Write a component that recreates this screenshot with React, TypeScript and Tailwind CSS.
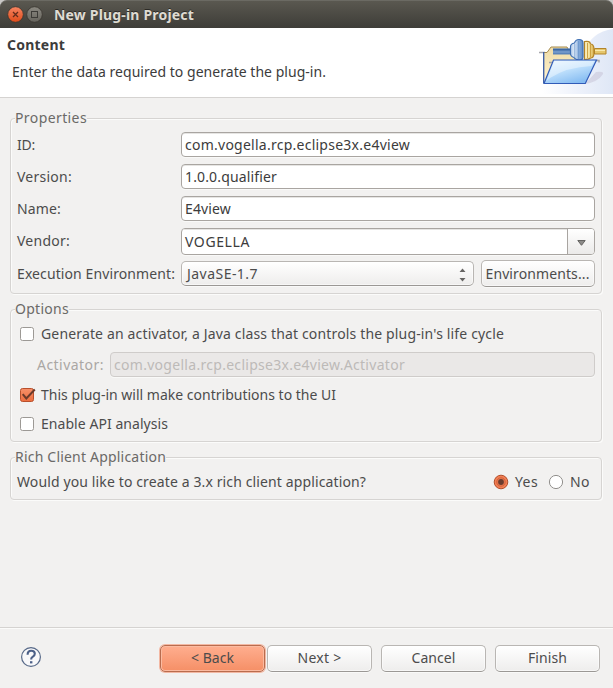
import { useLayoutEffect, useRef, useState } from 'react';
import type { ReactNode } from 'react';
import clsx from 'clsx';

/* A single line of text whose letter spacing is adjusted to fill a given width. */
function Text({ children, w, className }: { children: string; w: number; className?: string }) {
  const ref = useRef<HTMLSpanElement>(null);
  const [spacing, setSpacing] = useState(0);
  useLayoutEffect(() => {
    const el = ref.current;
    if (!el) return;
    const natural = el.getBoundingClientRect().width;
    setSpacing((w - natural) / children.length);
  }, [children, w]);
  return (
    <span className={clsx('block shrink-0 whitespace-pre leading-5', className)} style={{ width: w }}>
      <span ref={ref} className="inline-block" style={{ letterSpacing: spacing }}>
        {children}
      </span>
    </span>
  );
}

function Group({ title, w, className, children }: { title: string; w: number; className: string; children: ReactNode }) {
  return (
    <fieldset
      className={clsx(
        'relative mx-2.5 w-[592px] rounded-[4px] border border-[#d6d4d2] shadow-[1px_1px_0_#fbfbfa,inset_1px_1px_0_#fbfbfa]',
        className,
      )}
    >
      <div className="absolute -top-[11px] left-1 bg-[#f2f1f0]">
        <Text w={w} className="text-[#6b6967]">
          {title}
        </Text>
      </div>
      {children}
    </fieldset>
  );
}

function Field({ label, lw, value, vw }: { label: string; lw: number; value: string; vw: number }) {
  return (
    <div className="flex h-[25px] items-center">
      <div className="w-[164px]">
        <Text w={lw}>{label}</Text>
      </div>
      <div className="flex h-[25px] w-[414px] items-center rounded-[4px] border border-[#a9a5a1] bg-white pl-[3px] shadow-[inset_0_1px_0_#e6e5e3,0_1px_0_#f9f9f8]">
        <Text w={vw} className="text-[#3c3c3c]">
          {value}
        </Text>
      </div>
    </div>
  );
}

function Check({ checked }: { checked?: boolean }) {
  return (
    <svg className="mr-[5px] block shrink-0" width="17" height="16" viewBox="0 0 17 16">
      <defs>
        <linearGradient id="chk" x2="0" y2="1">
          <stop stopColor="#f79069" />
          <stop offset="1" stopColor="#ec6d3e" />
        </linearGradient>
      </defs>
      <rect
        x="1.5"
        y="1.5"
        width="13"
        height="13"
        rx="2"
        fill={checked ? 'url(#chk)' : '#fff'}
        stroke={checked ? '#b9502c' : '#9c9995'}
      />
      {checked && <path d="M3.7 7.2l3.6 4.2L15.8 2.500" fill="none" stroke="#6b3a2a" strokeWidth="2" />}
    </svg>
  );
}

function Button({ label, w, className }: { label: string; w: number; className?: string }) {
  return (
    <button
      className={clsx(
        'flex shrink-0 items-center justify-center rounded-[5px] border',
        className,
      )}
    >
      <Text w={w}>{label}</Text>
    </button>
  );
}

const plain =
  'border-[#b9b6b3] border-b-[#9b9895] bg-gradient-to-b from-white to-[#eeedec] shadow-[inset_0_0_0_1px_#ffffff80,0_1px_0_#f9f9f8]';

function FolderPlug() {
  return (
    <svg className="block" width="113" height="66" viewBox="0 0 113 66">
      <defs>
        <linearGradient id="glow" x1="0" x2="1" y2="0">
          <stop stopColor="#fff" />
          <stop offset=".5" stopColor="#eef2fb" />
          <stop offset="1" stopColor="#dfe7f6" />
        </linearGradient>
        <linearGradient id="front" x2=".6" y2="1">
          <stop stopColor="#eaf6ff" />
          <stop offset=".5" stopColor="#bfe0fc" />
          <stop offset="1" stopColor="#85bcf2" />
        </linearGradient>
        <linearGradient id="back" x2="0" y2="1">
          <stop stopColor="#f0dca6" />
          <stop offset="1" stopColor="#fff3d0" />
        </linearGradient>
        <linearGradient id="blue" x2="1" y2="0">
          <stop stopColor="#b3cbe8" />
          <stop offset=".35" stopColor="#e4eefa" />
          <stop offset=".6" stopColor="#8fb2de" />
          <stop offset="1" stopColor="#5f8cc6" />
        </linearGradient>
        <linearGradient id="gold" x2="1" y2="0">
          <stop stopColor="#fdf3c8" />
          <stop offset=".45" stopColor="#f6e4a0" />
          <stop offset="1" stopColor="#d9b04c" />
        </linearGradient>
      </defs>
      <path d="M42 66V50Q78 44 84 24Q91 4 113 1V66Z" fill="url(#glow)" />
      <path d="M85 56L96 44Q104 43 103 46Q98 54 85 56Z" fill="#c4bfd4" opacity=".5" />
      <path d="M39 24.500h6M92 32.500h7v2" fill="none" stroke="#a7a7ad" strokeWidth="1.500" />
      <path d="M43.500 55V24.500H47l4-5.500H67l2 4h13v14L57 55Z" fill="url(#back)" stroke="#a58a4c" />
      <path d="M43.700 24v31" stroke="#4262a7" strokeWidth="1.400" />
      <path d="M53 20.500h18v6H53z" fill="#5b84bb" />
      <path d="M53 21.500h18" stroke="#3d68a4" strokeWidth="1.500" />
      <path d="M53 24h18" stroke="#86a8d4" />
      <path
        d="M70.500 19q0-3.500 4-4Q75.500 11.500 79 11.500q4 0 4 3.500V29q0 3-4 3-4-.500-5-2.500-3.500-1-3.500-4z"
        fill="url(#blue)"
        stroke="#3f6fb3"
        strokeWidth="1.200"
      />
      <path d="M74.800 16v14M78.500 13v18" stroke="#6b95cc" strokeWidth=".8" />
      <path
        d="M84.500 13.500Q90 12.500 90.500 16q3 0 3.500 4.500V26q-.5 4-3.500 4-1.500 1.500-6 1.500z"
        fill="url(#gold)"
        stroke="#b38428"
        strokeWidth="1.200"
      />
      <path d="M87.500 15v15M90.500 17v12" stroke="#c99c3a" strokeWidth=".9" />
      <path d="M94.500 20.500H106v5.500H94.500z" fill="#e5c66c" stroke="#b38428" />
      <path d="M95 22.500h10" stroke="#f8e9ad" />
      <path d="M53.500 32H96.500L85.300 55.500H44Z" fill="url(#front)" stroke="#315bb8" strokeWidth="1.200" />
      <path d="M54.500 33H94.500L91.500 38Q67 39 50 50L46.500 53Z" fill="#fff" opacity=".4" />
      <path d="M49 34.500h3" stroke="#9fa1aa" strokeWidth="1.500" />
    </svg>
  );
}

export default function App() {
  return (
    <div className="flex h-[688px] w-[613px] flex-col overflow-hidden bg-[#f2f1f0] font-['Noto_Sans','Open_Sans',sans-serif] text-[14px] text-[#4c4c4c]">
      <div className="h-7 shrink-0 bg-[#c9c8c6]">
        <header className="flex h-7 items-center rounded-t-[7px] border-t border-[#6b6a63] bg-gradient-to-b from-[#5a5850] to-[#3e3d38] pl-[7px]">
          <svg className="block" width="36" height="18" viewBox="0 0 36 18">
            <defs>
              <linearGradient id="cl" x2="0" y2="1">
                <stop stopColor="#f68562" />
                <stop offset="1" stopColor="#df4b19" />
              </linearGradient>
              <linearGradient id="mx" x2="0" y2="1">
                <stop stopColor="#8b8981" />
                <stop offset="1" stopColor="#65635c" />
              </linearGradient>
            </defs>
            <circle cx="8.500" cy="8.500" r="7.800" fill="url(#cl)" stroke="#38352f" strokeWidth=".8" />
            <path d="M6 6l5 5m0-5l-5 5" stroke="#632c1b" strokeWidth="1.300" />
            <circle cx="27.500" cy="8.500" r="7.800" fill="url(#mx)" stroke="#38352f" strokeWidth=".8" />
            <rect x="24.500" y="5.500" width="6" height="6" fill="none" stroke="#3c3b37" />
          </svg>
          <Text w={140} className="ml-[11px] font-bold text-[#dfdbd2] [text-shadow:0_-1px_0_#2b2a26]">
            New Plug-in Project
          </Text>
        </header>
      </div>

      <section className="flex h-[70px] shrink-0 justify-between border-b border-[#d5d3d1] bg-white">
        <div className="pt-[7px]">
          <Text w={58} className="ml-[7px] font-bold text-[#3c3c3c]">
            Content
          </Text>
          <Text w={314} className="mt-[7px] ml-3 text-[#3c3c3c]">
            Enter the data required to generate the plug-in.
          </Text>
        </div>
        <FolderPlug />
      </section>

      <Group title="Properties" w={72} className="mt-5 h-[176px] shrink-0 px-1.5 pt-[13px]">
        <div className="flex flex-col gap-[7px]">
          <Field label="ID:" lw={18} value="com.vogella.rcp.eclipse3x.e4view" vw={225} />
          <Field label="Version:" lw={55} value="1.0.0.qualifier" vw={92} />
          <Field label="Name:" lw={44} value="E4view" vw={46} />
        </div>
        <div className="mt-[7px] flex h-[27px] items-center">
          <div className="w-[164px] pb-px">
            <Text w={53}>Vendor:</Text>
          </div>
          <div className="flex h-[27px] w-[414px] overflow-hidden rounded-[4px] border border-[#a9a5a1] bg-white shadow-[0_1px_0_#f9f9f8]">
            <div className="flex grow items-center border-r border-[#a9a5a1] pl-[3px] shadow-[inset_0_1px_0_#e6e5e3]">
              <Text w={65} className="text-[#3c3c3c]">
                VOGELLA
              </Text>
            </div>
            <div className="flex w-[26px] items-center justify-center bg-gradient-to-b from-white to-[#ebeae9]">
              <svg className="mt-0.5 block" width="9" height="6" viewBox="0 0 9 6">
                <path d="M.8.500h7.400L4.500 5.300Z" fill="#8d8c8a" stroke="#646361" />
              </svg>
            </div>
          </div>
        </div>
        <div className="mt-[5px] flex h-[27px] items-center">
          <div className="w-[164px]">
            <Text w={158}>Execution Environment:</Text>
          </div>
          <div
            className={clsx(
              'flex h-[25px] w-[293px] items-center justify-between rounded-[5px] border pr-[7px] pl-[5px]',
              plain,
            )}
          >
            <Text w={71}>JavaSE-1.7</Text>
            <svg className="mt-0.5 block" width="7" height="14" viewBox="0 0 7 14">
              <path d="M.5 4h6L3.500.500ZM.5 10h6l-3 3.500Z" fill="#666563" />
            </svg>
          </div>
          <Button label="Environments..." w={104} className={clsx('ml-[7px] h-[27px] w-[114px] pr-px', plain)} />
        </div>
      </Group>

      <Group title="Options" w={54} className="mt-[15px] h-[133px] shrink-0 pt-[14px] pl-2">
        <div className="flex h-5 items-center">
          <Check />
          <Text w={463}>Generate an activator, a Java class that controls the plug-in's life cycle</Text>
        </div>
        <div className="mt-2 flex h-[25px] items-center pl-[18px] text-[#aaa7a4]">
          <Text w={67}>Activator:</Text>
          <div className="ml-[6px] flex h-[25px] w-[485px] items-center rounded-[4px] border border-[#cfccca] bg-[#eae8e7] pl-[3px] shadow-[0_1px_0_#f9f9f8]">
            <Text w={291} className="text-[#bdbab8]">
              com.vogella.rcp.eclipse3x.e4view.Activator
            </Text>
          </div>
        </div>
        <div className="mt-2 flex h-5 items-center">
          <Check checked />
          <Text w={295}>This plug-in will make contributions to the UI</Text>
        </div>
        <div className="mt-[9px] flex h-5 items-center">
          <Check />
          <Text w={127}>Enable API analysis</Text>
        </div>
      </Group>

      <Group title="Rich Client Application" w={151} className="mt-[15px] h-[43px] shrink-0 pt-[14px] pl-1.5">
        <div className="flex h-5 items-center">
          <Text w={349}>Would you like to create a 3.x rich client application?</Text>
          <svg className="ml-[127px] block" width="16" height="16" viewBox="0 0 16 16">
            <circle cx="8" cy="8" r="6.800" fill="#f27e53" stroke="#b24f2c" />
            <circle cx="8" cy="8" r="4.200" fill="none" stroke="#cf6039" />
            <circle cx="8" cy="8" r="2.900" fill="#6b3c2e" />
          </svg>
          <Text w={23} className="ml-1.5">
            Yes
          </Text>
          <svg className="ml-[10px] block" width="16" height="16" viewBox="0 0 16 16">
            <circle cx="8" cy="8" r="6.600" fill="#fff" stroke="#92908d" />
          </svg>
          <Text w={20} className="ml-1.5">
            No
          </Text>
        </div>
      </Group>

      <footer className="mt-auto flex h-[61px] shrink-0 items-center border-t border-[#d5d3d1] pl-5 shadow-[inset_0_1px_0_#fbfbfa]">
        <svg className="mr-[118px] mb-0.5 block shrink-0" width="22" height="22" viewBox="0 0 22 22">
          <circle cx="11" cy="11" r="9.400" fill="#f8f8fa" stroke="#576988" strokeWidth="1.200" />
          <path
            d="M7.600 8.800q0-4 3.600-4 3.600 0 3.600 3 0 1.700-1.900 2.900-1.700 1-1.700 2.300v.5"
            fill="none"
            stroke="#4c6088"
            strokeWidth="2.100"
          />
          <path d="M10 15.200h2.400v2.200H10z" fill="#4c6088" />
        </svg>
        <Button
          label="< Back"
          w={43}
          className="h-[27px] w-[105px] border-[#b96c4e] bg-gradient-to-b from-[#ffae8f] to-[#f58f66] shadow-[0_0_0_1px_#f3b8a3,inset_0_0_0_1px_#fbbba1]"
        />
        <Button label="Next >" w={44} className={clsx('ml-0.5 h-[27px] w-[105px]', plain)} />
        <Button label="Cancel" w={44} className={clsx('ml-[9px] h-[27px] w-[105px]', plain)} />
        <Button label="Finish" w={39} className={clsx('ml-[9px] h-[27px] w-[105px]', plain)} />
      </footer>
    </div>
  );
}
